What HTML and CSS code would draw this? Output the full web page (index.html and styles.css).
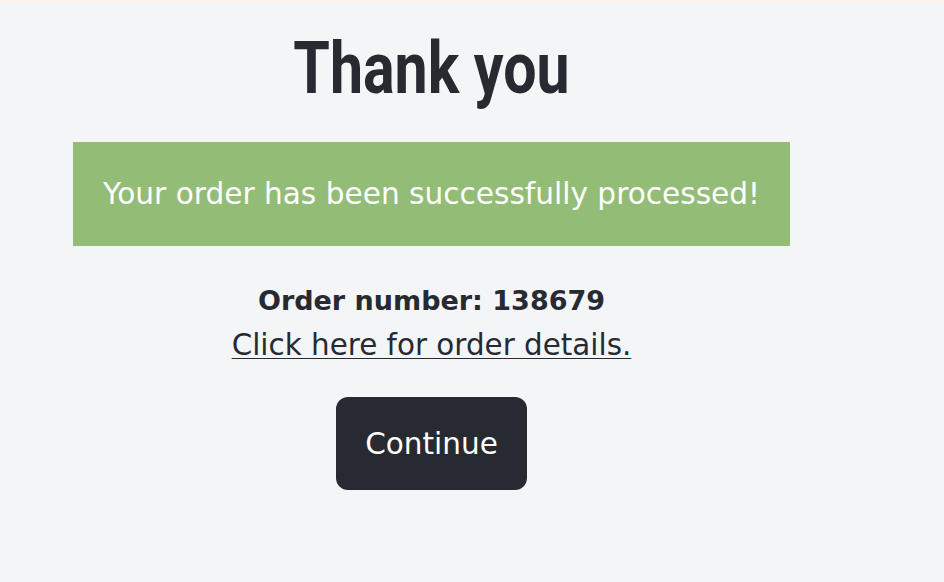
FILE: index.html
```html
<!DOCTYPE html>
<html lang="en">
<head>
<meta charset="utf-8">
<title>Thank you</title>
<link rel="stylesheet" href="styles.css">
</head>
<body>
<div class="topbar"></div>
<main class="page">
  <section class="panel">
    <h1 class="title"><span class="title-text">Thank you</span></h1>
    <div class="notice">Your order has been successfully processed!</div>
    <p class="order-number">Order number: 138679</p>
    <a class="details-link" href="#">Click here for order details.</a>
    <button class="continue-btn" type="button">Continue</button>
  </section>
</main>
</body>
</html>
```
FILE: styles.css
```css
* { box-sizing: border-box; }
html, body { margin: 0; padding: 0; }
body {
  background: #f4f5f7;
  color: #272a31;
  font-family: "DejaVu Sans", "Open Sans", sans-serif;
  width: 944px;
  height: 582px;
  overflow: hidden;
}
.topbar {
  height: 2px;
  background: #fcf2ea;
}
.page {
  padding-left: 73px;
}
.panel {
  width: 717px;
  display: flex;
  flex-direction: column;
  align-items: center;
}
.title {
  margin: 7px 0 0;
  height: 133px;
  font-family: "Roboto", "Liberation Sans", sans-serif;
  font-weight: 700;
  font-size: 72px;
  line-height: 120px;
  letter-spacing: 0;
}
.title-text {
  display: inline-block;
  transform: scaleX(0.82);
}
.notice {
  align-self: stretch;
  height: 104px;
  background: #93bd76;
  color: #ffffff;
  font-size: 29.6px;
  display: flex;
  align-items: center;
  justify-content: center;
}
.order-number {
  margin: 35px 0 0;
  font-weight: 700;
  font-size: 27px;
  line-height: 40px;
}
.details-link {
  color: #272a31;
  font-size: 29.4px;
  line-height: 48px;
  text-decoration: underline;
  text-underline-offset: 3px;
  text-decoration-thickness: 1px;
}
.continue-btn {
  margin-top: 28px;
  width: 191px;
  height: 93px;
  border: none;
  border-radius: 12px;
  background: #272a31;
  color: #ffffff;
  font-family: "DejaVu Sans", "Open Sans", sans-serif;
  font-size: 29.5px;
  font-weight: 400;
  cursor: pointer;
}
```
